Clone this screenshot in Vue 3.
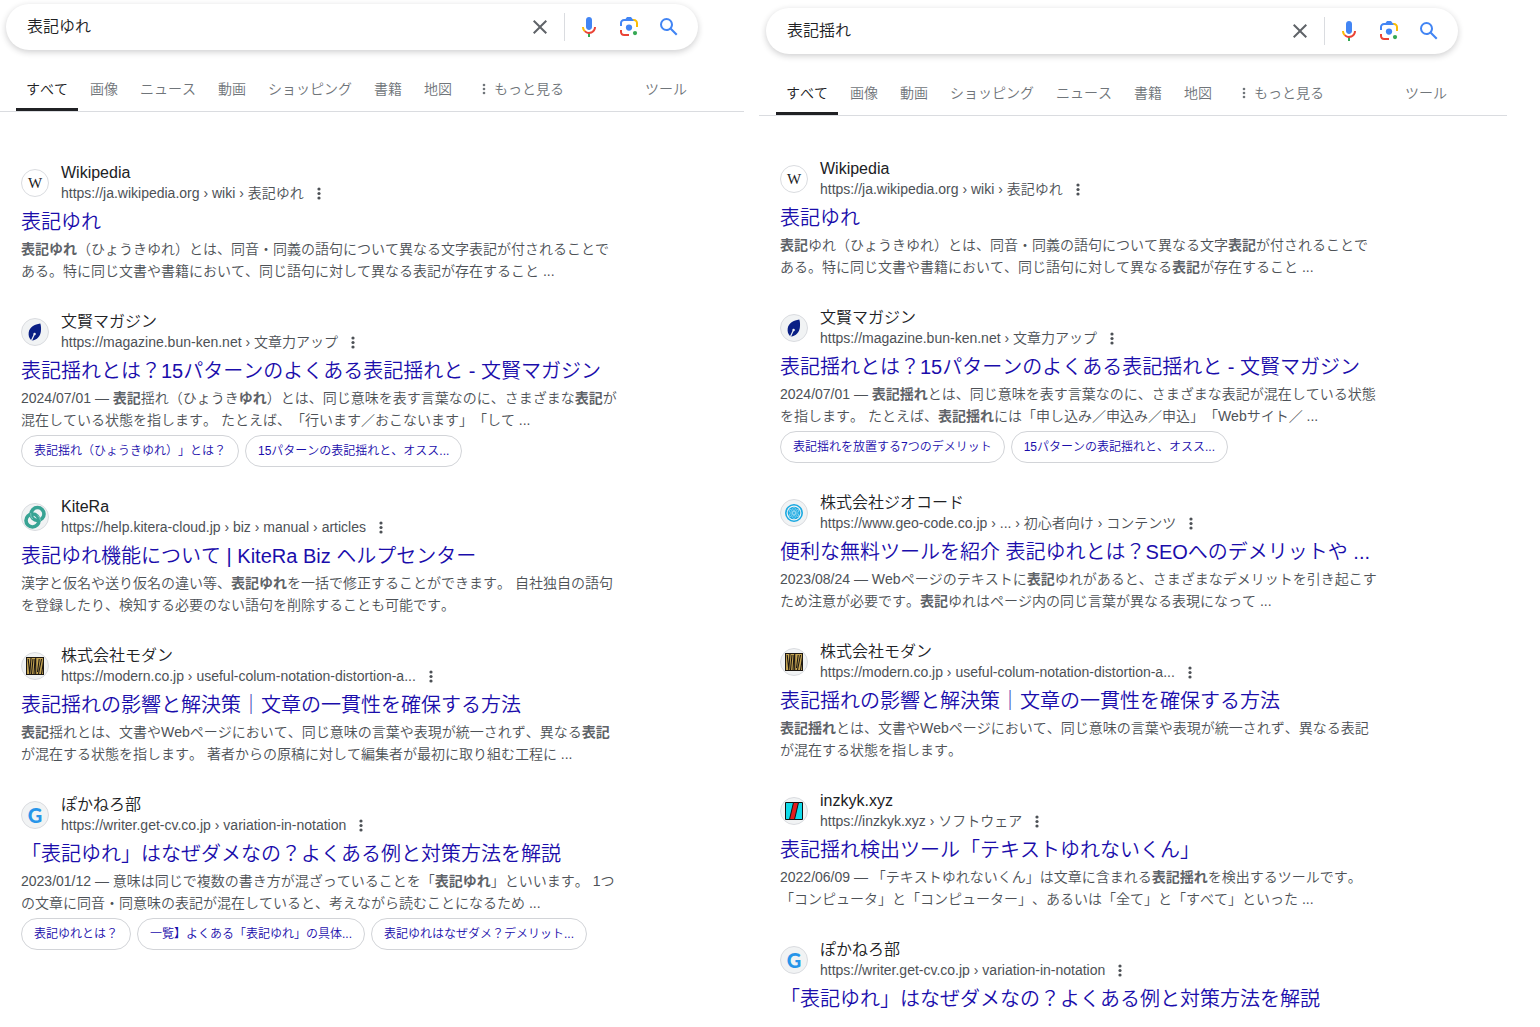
<script setup>
const modern = {
  icon: 'modern',
  site: '株式会社モダン',
  url: 'https://modern.co.jp › useful-colum-notation-distortion-a...',
  title: '表記揺れの影響と解決策｜文章の一貫性を確保する方法',
}
const writer = {
  icon: 'writer',
  site: 'ぽかねろ部',
  url: 'https://writer.get-cv.co.jp › variation-in-notation',
  title: '「表記ゆれ」はなぜダメなの？よくある例と対策方法を解説',
}
const wikipedia = {
  icon: 'wikipedia',
  site: 'Wikipedia',
  url: 'https://ja.wikipedia.org › wiki › 表記ゆれ',
  title: '表記ゆれ',
}
const bunken = {
  icon: 'bunken',
  site: '文賢マガジン',
  url: 'https://magazine.bun-ken.net › 文章力アップ',
  title: '表記揺れとは？15パターンのよくある表記揺れと - 文賢マガジン',
}

// Asterisks in a snippet surround the words shown in bold.
const panels = [
  {
    id: 'left',
    query: '表記ゆれ',
    tabs: ['すべて', '画像', 'ニュース', '動画', 'ショッピング', '書籍', '地図'],
    results: [
      { ...wikipedia, snippet: '*表記ゆれ*（ひょうきゆれ）とは、同音・同義の語句について異なる文字表記が付されることである。特に同じ文書や書籍において、同じ語句に対して異なる表記が存在すること ...' },
      {
        ...bunken,
        snippet: '2024/07/01 — *表記*揺れ（ひょうき*ゆれ*）とは、同じ意味を表す言葉なのに、さまざまな*表記*が混在している状態を指します。 たとえば、「行います／おこないます」「して ...',
        chips: ['表記揺れ（ひょうきゆれ）」とは？', '15パターンの表記揺れと、オスス...'],
      },
      {
        icon: 'kitera',
        site: 'KiteRa',
        url: 'https://help.kitera-cloud.jp › biz › manual › articles',
        title: '表記ゆれ機能について | KiteRa Biz ヘルプセンター',
        snippet: '漢字と仮名や送り仮名の違い等、*表記ゆれ*を一括で修正することができます。 自社独自の語句を登録したり、検知する必要のない語句を削除することも可能です。',
      },
      { ...modern, snippet: '*表記*揺れとは、文書やWebページにおいて、同じ意味の言葉や表現が統一されず、異なる*表記*が混在する状態を指します。 著者からの原稿に対して編集者が最初に取り組む工程に ...' },
      {
        ...writer,
        snippet: '2023/01/12 — 意味は同じで複数の書き方が混ざっていることを「*表記ゆれ*」といいます。 1つの文章に同音・同意味の表記が混在していると、考えながら読むことになるため ...',
        chips: ['表記ゆれとは？', '一覧】よくある「表記ゆれ」の具体...', '表記ゆれはなぜダメ？デメリット...'],
      },
    ],
  },
  {
    id: 'right',
    query: '表記揺れ',
    tabs: ['すべて', '画像', '動画', 'ショッピング', 'ニュース', '書籍', '地図'],
    results: [
      { ...wikipedia, snippet: '*表記*ゆれ（ひょうきゆれ）とは、同音・同義の語句について異なる文字*表記*が付されることである。特に同じ文書や書籍において、同じ語句に対して異なる*表記*が存在すること ...' },
      {
        ...bunken,
        snippet: '2024/07/01 — *表記揺れ*とは、同じ意味を表す言葉なのに、さまざまな表記が混在している状態を指します。 たとえば、*表記揺れ*には「申し込み／申込み／申込」「Webサイト／ ...',
        chips: ['表記揺れを放置する7つのデメリット', '15パターンの表記揺れと、オスス...'],
      },
      {
        icon: 'geocode',
        site: '株式会社ジオコード',
        url: 'https://www.geo-code.co.jp › ... › 初心者向け › コンテンツ',
        title: '便利な無料ツールを紹介 表記ゆれとは？SEOへのデメリットや ...',
        snippet: '2023/08/24 — Webページのテキストに*表記*ゆれがあると、さまざまなデメリットを引き起こすため注意が必要です。*表記*ゆれはページ内の同じ言葉が異なる表現になって ...',
      },
      { ...modern, snippet: '*表記揺れ*とは、文書やWebページにおいて、同じ意味の言葉や表現が統一されず、異なる表記が混在する状態を指します。' },
      {
        icon: 'inzkyk',
        site: 'inzkyk.xyz',
        url: 'https://inzkyk.xyz › ソフトウェア',
        title: '表記揺れ検出ツール「テキストゆれないくん」',
        snippet: '2022/06/09 — 「テキストゆれないくん」は文章に含まれる*表記揺れ*を検出するツールです。「コンピュータ」と「コンピューター」、あるいは「全て」と「すべて」といった ...',
      },
      writer,
    ],
  },
]

const segments = (text) => text.split('*').map((t, i) => ({ t, bold: i % 2 === 1 })).filter((s) => s.t)
</script>

<template>
  <main class="page">
    <section v-for="panel in panels" :key="panel.id" class="panel" :class="panel.id">
      <header class="header">
        <form class="search" role="search" @submit.prevent>
          <input class="query" type="text" aria-label="検索" :value="panel.query" />
          <button class="icon-btn" type="button" aria-label="クリア">
            <svg width="24" height="24" viewBox="0 0 24 24"><path fill="#5f6368" d="M19 6.41 17.59 5 12 10.59 6.41 5 5 6.41 10.59 12 5 17.59 6.41 19 12 13.41 17.59 19 19 17.59 13.41 12z" /></svg>
          </button>
          <span class="divider"></span>
          <button class="icon-btn" type="button" aria-label="音声で検索">
            <svg width="24" height="24" viewBox="0 0 24 24">
              <path fill="#4285f4" d="M12 15c1.66 0 3-1.31 3-2.97V4.98C15 3.31 13.66 2 12 2S9 3.31 9 4.98v7.05C9 13.69 10.34 15 12 15z" />
              <path fill="#34a853" d="M11 18.08h2V22h-2z" />
              <path fill="#fbbc04" d="M7.05 16.87C5.78 15.59 5 13.86 5 12h2c0 1.45.56 2.42 1.47 3.38z" />
              <path fill="#ea4335" d="M12 16.93a4.97 5.25 0 0 1-3.54-1.55l-1.41 1.49C8.31 18.14 9.99 19 12 19c3.87 0 6.99-3.14 6.99-7H17c0 2.92-2.24 4.93-5 4.93z" />
            </svg>
          </button>
          <button class="icon-btn" type="button" aria-label="画像で検索">
            <svg width="24" height="24" viewBox="0 0 192 192">
              <circle fill="#34a853" cx="144" cy="144" r="17" />
              <circle fill="#4285f4" cx="96" cy="100" r="25" />
              <path fill="#ea4335" d="M24 135.200c0 18.110 14.690 32.800 32.800 32.800H96v-16H56.100C47.200 152 40 144.800 40 135.900V120H24z" />
              <path fill="#fbbc04" d="M168 64.800c0-18.110-14.690-32.800-32.800-32.800H116l20 16c8.800 0 16 7.290 16 16.200V96h16z" />
              <path fill="#4285f4" d="M112 16H80L68 32H56.800C38.690 32 24 46.690 24 64.800V88h16V64.100C40 55.200 47.200 48 56.100 48H136z" />
            </svg>
          </button>
          <button class="icon-btn" type="submit" aria-label="検索を実行">
            <svg width="24" height="24" viewBox="0 0 24 24"><path fill="#4285f4" d="M20.490 19l-5.730-5.730C15.530 12.200 16 10.910 16 9.500A6.500 6.500 0 1 0 9.500 16c1.410 0 2.700-.47 3.770-1.240L19 20.490zM5 9.500C5 7.010 7.010 5 9.500 5S14 7.010 14 9.500 11.990 14 9.500 14 5 11.990 5 9.500z" /></svg>
          </button>
        </form>
        <nav class="tabs">
          <a v-for="(tab, i) in panel.tabs" :key="tab" href="#" class="tab" :class="{ active: i === 0 }">{{ tab }}</a>
          <button type="button" class="tab more">
            <svg width="4" height="12" viewBox="0 0 4 12" fill="#70757a"><circle cx="2" cy="2" r="1.300" /><circle cx="2" cy="6" r="1.300" /><circle cx="2" cy="10" r="1.300" /></svg>
            もっと見る
          </button>
          <button type="button" class="tab tools">ツール</button>
        </nav>
      </header>

      <div class="results">
        <article v-for="(r, i) in panel.results" :key="i" class="result">
          <div class="source">
            <span class="favicon" :class="r.icon">
              <span v-if="r.icon === 'wikipedia'" class="w-mark">W</span>
              <span v-else-if="r.icon === 'writer'" class="g-mark">G</span>
              <svg v-else-if="r.icon === 'bunken'" width="18" height="18" viewBox="0 0 18 18">
                <path fill="#0a1f85" d="M14.300.5C8.500 1.300 3.500 4 2.700 9.500c-.4 2.800.4 5.300 1.800 7L6 17.500c5-.6 8.400-4.300 8.900-9.300.3-2.800.2-5.400-.6-7.700z" />
                <path stroke="#f1f3f4" stroke-width="1.200" fill="none" d="M5.500 17.500 8.500 11" />
                <circle cx="8.600" cy="11" r="1.200" fill="#f1f3f4" />
              </svg>
              <svg v-else-if="r.icon === 'kitera'" width="26" height="26" viewBox="0 0 26 26" fill="none" stroke="#38a394" stroke-width="3.600">
                <circle cx="15.500" cy="10" r="6.500" />
                <circle cx="10.500" cy="16.500" r="6.500" />
                <path stroke="#8fcdc4" stroke-width=".8" d="M15.500 11.700a6 6 0 0 1 3 5M8.700 9a7 7 0 0 0 2 6" />
              </svg>
              <svg v-else-if="r.icon === 'modern'" width="18" height="18" viewBox="0 0 18 18">
                <path fill="#c6a552" d="M0 0h18v18H0z" />
                <path stroke="#1d1813" stroke-width="1.100" fill="none" d="M.5 0v18M2.200 2l1.600 15M5 1l-1.200 15M5.500 17 7 2M8 17 9 2M9.700 0v18M11.500 15l1.700-13M12.500 17l3-15M15.500 17l2-13M0 .5h18M0 17.500h18M17.500 0v18" />
              </svg>
              <svg v-else-if="r.icon === 'geocode'" width="18" height="18" viewBox="0 0 18 18" fill="none" stroke="#1ba9e1">
                <circle cx="9" cy="9" r="8.200" stroke-width="1.600" />
                <circle cx="9" cy="9" r="6.300" fill="#1ba9e1" stroke="none" />
                <g stroke="#d9f1fb" stroke-width=".5">
                  <circle cx="9" cy="9" r="1.500" />
                  <path d="M9 7.500 7.500 4.800 9 3.200l1.500 1.600zM9 10.500l-1.500 2.700L9 14.800l1.500-1.600zM7.700 8.200 4.600 8.100 3.900 6l2.300-.5zM10.300 8.200l3.100-.1.700-2.100-2.300-.5zM7.700 9.800l-3.100.1-.7 2.100 2.300.5zM10.300 9.800l3.100.1.700 2.100-2.300.5z" />
                </g>
              </svg>
              <svg v-else width="18" height="18" viewBox="0 0 18 18">
                <path fill="#10dbea" stroke="#111" d="M.5.500h17v17H.5z" />
                <path fill="#e51c1c" stroke="#111" d="M8.500.5h5l-4 17h-5z" />
              </svg>
            </span>
            <div class="source-text">
              <div class="site">{{ r.site }}</div>
              <div class="url">
                <cite>{{ r.url }}</cite>
                <button type="button" class="kebab" aria-label="この結果について">
                  <svg width="4" height="14" viewBox="0 0 4 14" fill="#4d5156"><circle cx="2" cy="2" r="1.600" /><circle cx="2" cy="6.500" r="1.600" /><circle cx="2" cy="11" r="1.600" /></svg>
                </button>
              </div>
            </div>
          </div>
          <h3 class="title"><a href="#">{{ r.title }}</a></h3>
          <p v-if="r.snippet" class="snippet"><template v-for="(s, n) in segments(r.snippet)" :key="n"><b v-if="s.bold">{{ s.t }}</b><template v-else>{{ s.t }}</template></template></p>
          <div v-if="r.chips" class="chips">
            <a v-for="chip in r.chips" :key="chip" href="#" class="chip">{{ chip }}</a>
          </div>
        </article>
      </div>
    </section>
  </main>
</template>

<style>
body {
  margin: 0;
  background: #fff;
}
</style>

<style scoped>
.page {
  display: grid;
  grid-template-columns: minmax(0, 744fr) minmax(0, 748fr);
  gap: 15px;
  padding-right: 33px;
  font-family: "Liberation Sans", "Noto Sans CJK JP", sans-serif;
  font-weight: 350;
  font-kerning: none;
  text-spacing-trim: space-all;
  color: #202124;
}
.header {
  padding: 4px 6px 0;
  border-bottom: 1px solid #dadce0;
}
.right .header {
  padding: 8px 7px 0;
}
.search {
  display: flex;
  align-items: center;
  box-sizing: border-box;
  max-width: 692px;
  height: 46px;
  padding: 0 9px 0 21px;
  border-radius: 23px;
  background: #fff;
  box-shadow: 0 2px 6px rgba(32, 33, 36, 0.22);
}
.query {
  flex: 1;
  min-width: 0;
  height: 40px;
  padding: 0 0 4px;
  border: 0;
  outline: 0;
  background: transparent;
  font: inherit;
  font-size: 16px;
  color: #202124;
}
button {
  padding: 0;
  border: 0;
  background: none;
  font: inherit;
  color: inherit;
  cursor: pointer;
}
.icon-btn {
  display: flex;
  align-items: center;
  justify-content: center;
  width: 40px;
  height: 40px;
}
.divider {
  width: 1px;
  height: 28px;
  margin: 0 4px;
  background: #dadce0;
}
.tabs {
  display: flex;
  gap: 2px;
  max-width: 681px;
  margin: 20px 0 0 10px;
}
.tab {
  display: flex;
  align-items: center;
  height: 38px;
  padding: 0 10px;
  border-bottom: 3px solid transparent;
  font-size: 14px;
  line-height: 20px;
  white-space: nowrap;
  text-decoration: none;
  color: #70757a;
}
.tab.active {
  border-bottom-color: #202124;
  color: #202124;
}
.more {
  gap: 8px;
  margin-left: 8px;
}
.tools {
  margin-left: auto;
}
button.tab {
  box-sizing: content-box;
}
.results {
  display: flex;
  flex-direction: column;
  gap: 29px;
  max-width: 600px;
  padding: 50px 0 0 21px;
}
.right .results {
  padding-top: 42px;
}
.source {
  display: flex;
  align-items: center;
  gap: 12px;
}
.favicon {
  display: flex;
  flex: none;
  align-items: center;
  justify-content: center;
  box-sizing: border-box;
  width: 28px;
  height: 28px;
  border: 1px solid #dadce0;
  border-radius: 50%;
  background: #f1f3f4;
}
.favicon.wikipedia {
  background: #fff;
}
.w-mark {
  font: 15px/18px "Liberation Serif", serif;
  color: #202124;
}
.g-mark {
  font: 900 20px/20px Lato, sans-serif;
  color: #2795e9;
}
.site {
  font-size: 16px;
  line-height: 21px;
  height: 21px;
}
.url {
  display: flex;
  align-items: center;
  height: 21px;
  font-size: 14px;
  line-height: 21px;
  white-space: nowrap;
  color: #4d5156;
}
cite {
  font-style: normal;
  font-kerning: normal;
}
.kebab {
  display: flex;
  align-items: center;
  margin-left: 13px;
}
.title {
  margin: 5px 0 3px;
  font-size: 20px;
  font-weight: inherit;
  line-height: 26px;
  height: 26px;
  white-space: nowrap;
}
.title a {
  text-decoration: none;
  color: #1a0dab;
}
.snippet {
  margin: 0;
  font-size: 14px;
  line-height: 22px;
  color: #4d5156;
}
.snippet b {
  font-weight: 700;
  color: #5f6368;
}
.chips {
  display: flex;
  gap: 6px;
  margin-top: 4px;
}
.chip {
  box-sizing: border-box;
  height: 32px;
  padding: 0 12px;
  border: 1px solid #d2d4d8;
  border-radius: 16px;
  font-size: 12px;
  line-height: 30px;
  white-space: nowrap;
  text-decoration: none;
  color: #1a0dab;
}
</style>
